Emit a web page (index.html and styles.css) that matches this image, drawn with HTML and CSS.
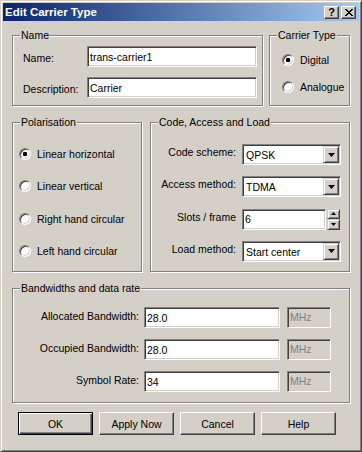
FILE: index.html
```html
<!DOCTYPE html>
<html lang="en">
<head>
  <meta charset="UTF-8" />
  <title>Edit Carrier Type</title>
  <link rel="stylesheet" href="styles.css">
</head>
<body>

  <div class="window">
    <div class="titlebar">
      <span class="title">Edit Carrier Type</span>
      <div class="caption-btns">
        <span class="cap-btn help">?</span>
        <span class="cap-btn">
          <svg width="8" height="7" viewBox="0 0 8 7"><path d="M0 0h2v1h1v1h2v-1h1v-1h2v1h-1v1h-1v1h-1v1h1v1h1v1h1v1h-2v-1h-1v-1h-2v1h-1v1h-2v-1h1v-1h1v-1h1v-1h-1v-1h-1v-1h-1z" fill="#000"/></svg>
        </span>
      </div>
    </div>

    <div class="client">
      <div class="row row-top">
        <fieldset class="group group-name">
          <legend>Name</legend>
          <div class="name-grid">
            <label for="carrierName">Name:</label>
            <input type="text" id="carrierName" class="edit" value="trans-carrier1">
            <label for="carrierDesc">Description:</label>
            <input type="text" id="carrierDesc" class="edit" value="Carrier">
          </div>
        </fieldset>

        <fieldset class="group group-type">
          <legend>Carrier Type</legend>
          <div class="radio-list type-list">
            <div class="radio-row"><span class="radio checked"></span>Digital</div>
            <div class="radio-row"><span class="radio"></span>Analogue</div>
          </div>
        </fieldset>
      </div>

      <div class="row row-mid">
        <fieldset class="group group-pol">
          <legend>Polarisation</legend>
          <div class="radio-list pol-list">
            <div class="radio-row"><span class="radio checked"></span>Linear horizontal</div>
            <div class="radio-row"><span class="radio"></span>Linear vertical</div>
            <div class="radio-row"><span class="radio"></span>Right hand circular</div>
            <div class="radio-row"><span class="radio"></span>Left hand circular</div>
          </div>
        </fieldset>

        <fieldset class="group group-code">
          <legend>Code, Access and Load</legend>
          <div class="code-grid">
            <span class="lbl">Code scheme:</span>
            <div class="combo"><span class="value">QPSK</span><span class="drop"><svg width="7" height="4" viewBox="0 0 7 4"><path d="M0 0h7L3.5 4z" fill="#000"/></svg></span></div>

            <span class="lbl">Access method:</span>
            <div class="combo"><span class="value">TDMA</span><span class="drop"><svg width="7" height="4" viewBox="0 0 7 4"><path d="M0 0h7L3.5 4z" fill="#000"/></svg></span></div>

            <span class="lbl">Slots / frame</span>
            <div class="spin">
              <input type="text" class="edit" value="6">
              <div class="spin-btns">
                <span class="spin-btn"><svg width="5" height="3" viewBox="0 0 5 3"><path d="M2.5 0L5 3H0z" fill="#000"/></svg></span>
                <span class="spin-btn"><svg width="5" height="3" viewBox="0 0 5 3"><path d="M0 0h5L2.5 3z" fill="#000"/></svg></span>
              </div>
            </div>

            <span class="lbl">Load method:</span>
            <div class="combo"><span class="value">Start center</span><span class="drop"><svg width="7" height="4" viewBox="0 0 7 4"><path d="M0 0h7L3.5 4z" fill="#000"/></svg></span></div>
          </div>
        </fieldset>
      </div>

      <fieldset class="group group-bw">
        <legend>Bandwidths and data rate</legend>
        <div class="bw-grid">
          <span class="lbl">Allocated Bandwidth:</span>
          <input type="text" class="edit" value="28.0">
          <span class="unit">MHz</span>

          <span class="lbl">Occupied Bandwidth:</span>
          <input type="text" class="edit" value="28.0">
          <span class="unit">MHz</span>

          <span class="lbl">Symbol Rate:</span>
          <input type="text" class="edit" value="34">
          <span class="unit">MHz</span>
        </div>
      </fieldset>

      <div class="buttons">
        <button class="btn default">OK</button>
        <button class="btn">Apply Now</button>
        <button class="btn">Cancel</button>
        <button class="btn">Help</button>
      </div>
    </div>
  </div>

</body>
</html>
```

FILE: styles.css
```css
* {
  margin: 0; padding: 0; box-sizing: border-box;
  font-family: 'Liberation Sans', Arial, sans-serif;
}
body {
  background: #d4d0c8;
  font-size: 10.5px;
  color: #000;
}

/* window frame */
.window {
  width: 362px; height: 452px;
  background: #d4d0c8;
  border: 1px solid;
  border-color: #d4d0c8 #404040 #404040 #d4d0c8;
  box-shadow: inset 1px 1px 0 #fff, inset -1px -1px 0 #808080;
  padding: 2px;
}

.titlebar {
  height: 18px;
  display: flex; align-items: center; justify-content: space-between;
  padding-left: 2px;
  background: linear-gradient(to right, #0a246a, #a6caf0);
}
.title {
  color: #fff; font-weight: bold; font-size: 11.5px;
}
.caption-btns { display: flex; gap: 2px; margin-right: 3px; }
.cap-btn {
  width: 15px; height: 13px;
  display: flex; align-items: center; justify-content: center;
  background: #d4d0c8;
  border: 1px solid;
  border-color: #fff #404040 #404040 #fff;
  box-shadow: inset -1px -1px 0 #808080;
  font-weight: bold; font-size: 11px; line-height: 11px;
}

.client { padding: 8px 9px 0; }

.row { display: flex; }
.row-top { gap: 6px; }
.row-mid { gap: 8px; margin-top: 10px; }

/* etched group box */
.group {
  margin: 0; padding: 0; min-width: 0;
  border: 1px solid #808080;
  box-shadow: inset 1px 1px 0 #fff, 1px 1px 0 #fff;
}
.group legend {
  margin-left: 7px; padding: 0 1px;
  line-height: 13px; font-size: 10.5px;
  background: #d4d0c8;
}

.group-name { width: 251px; height: 77px; }
.group-type { width: 81px; height: 77px; }
.group-pol { width: 130px; height: 156px; }
.group-code { width: 200px; height: 156px; }
.group-bw { width: 338px; height: 121px; margin-top: 10px; }

/* sunken edit */
.edit {
  height: 21px;
  border: 1px solid;
  border-color: #808080 #fff #fff #808080;
  box-shadow: inset 1px 1px 0 #404040, inset -1px -1px 0 #d4d0c8;
  background: #fff;
  padding: 0 2px;
  font-size: 10.5px; color: #000;
  outline: none;
  width: 100%;
}

.name-grid {
  display: grid;
  grid-template-columns: 64px 1fr;
  row-gap: 10px; align-items: center;
  padding: 4px 5px 0 10px;
}
.name-grid label { padding-top: 2px; }

/* radios */
.radio-list { display: flex; flex-direction: column; }
.type-list { padding: 10px 0 0 12px; gap: 11px; }
.pol-list { padding: 17px 0 0 6px; gap: 16.3px; }
.radio-row {
  height: 16px;
  display: flex; align-items: center; gap: 6px;
  white-space: nowrap;
}
.radio {
  width: 12px; height: 12px; flex: none;
  border-radius: 50%;
  background: #fff;
  border: 1px solid;
  border-color: #808080 #fff #fff #808080;
  box-shadow: inset 1px 1px 0 #404040, inset -1px -1px 0 #d4d0c8;
}
.radio.checked {
  background: radial-gradient(circle, #000 0 2px, #fff 2.6px);
}

/* code, access, load */
.code-grid {
  display: grid;
  grid-template-columns: 79px 1fr;
  column-gap: 6px; row-gap: 11.3px;
  padding: 15px 8px 0 6px;
}
.lbl { text-align: right; white-space: nowrap; line-height: 13px; margin-top: 2px; }

.combo {
  height: 21px;
  display: flex;
  border: 1px solid;
  border-color: #808080 #fff #fff #808080;
  box-shadow: inset 1px 1px 0 #404040, inset -1px -1px 0 #d4d0c8;
  background: #fff;
  padding: 1px;
}
.combo .value { flex: 1; padding-left: 2px; line-height: 18px; }

.drop, .spin-btn {
  display: flex; align-items: center; justify-content: center;
  background: #d4d0c8;
  border: 1px solid;
  border-color: #d4d0c8 #404040 #404040 #d4d0c8;
  box-shadow: inset 1px 1px 0 #fff, inset -1px -1px 0 #808080;
}
.drop { width: 16px; height: 17px; }

.spin { display: flex; gap: 1px; margin-right: 1px; }
.spin .edit { flex: 1; }
.spin-btns { width: 13px; display: flex; flex-direction: column; }
.spin-btn { height: 10.5px; }

/* bandwidths */
.bw-grid {
  display: grid;
  grid-template-columns: 126px 136px 46px;
  column-gap: 5px; row-gap: 11px;
  padding: 12px 0 0 0;
}
.bw-grid .lbl { margin-top: 3px; }
.unit {
  height: 21px; margin-left: 2px;
  border: 1px solid;
  border-color: #808080 #fff #fff #808080;
  box-shadow: inset 1px 1px 0 #404040, inset -1px -1px 0 #d4d0c8;
  padding: 0 2px;
  line-height: 19px;
  color: #808080;
}

/* push buttons */
.buttons {
  display: flex; gap: 6px;
  margin: 9px 0 0 6px;
}
.btn {
  width: 75px; height: 23px;
  background: #d4d0c8;
  border: 1px solid;
  border-color: #fff #404040 #404040 #fff;
  box-shadow: inset -1px -1px 0 #808080;
  font-size: 10.5px; color: #000;
}
.btn.default {
  border-color: #000;
  box-shadow: inset 1px 1px 0 #fff, inset -1px -1px 0 #404040, inset -2px -2px 0 #808080;
}
```
